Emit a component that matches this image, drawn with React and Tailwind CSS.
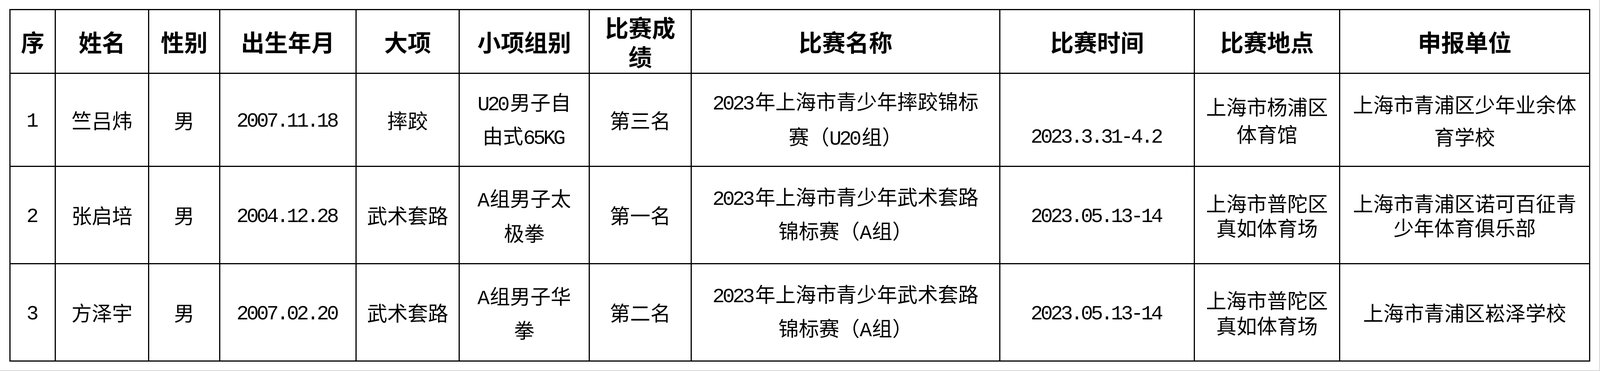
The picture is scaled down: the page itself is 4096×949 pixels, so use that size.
const HEAD = ['序', '姓名', '性别', '出生年月', '大项', '小项组别', ['比赛成', '绩'], '比赛名称', '比赛时间', '比赛地点', '申报单位']

const ROWS = [
  [
    { t: '1' },
    { t: '竺吕炜' },
    { t: '男' },
    { t: '2007.11.18' },
    { t: '摔跤' },
    { t: ['U20男子自', '由式65KG'], lh: 'leading-[77px]' },
    { t: '第三名' },
    { t: ['2023年上海市青少年摔跤锦标', '赛（U20组）'], lh: 'leading-[81px]' },
    { t: '2023.3.31-4.2', pad: 'pt-[81px]' },
    { t: ['上海市杨浦区', '体育馆'], lh: 'leading-[70px]' },
    { t: ['上海市青浦区少年业余体', '育学校'], lh: 'leading-[83px]' },
  ],
  [
    { t: '2' },
    { t: '张启培' },
    { t: '男' },
    { t: '2004.12.28' },
    { t: '武术套路' },
    { t: ['A组男子太', '极拳'], lh: 'leading-[80px]' },
    { t: '第一名' },
    { t: ['2023年上海市青少年武术套路', '锦标赛（A组）'], lh: 'leading-[78px]' },
    { t: '2023.05.13-14' },
    { t: ['上海市普陀区', '真如体育场'], lh: 'leading-[63px]' },
    { t: ['上海市青浦区诺可百征青', '少年体育俱乐部'], lh: 'leading-[62px]' },
  ],
  [
    { t: '3' },
    { t: '方泽宇' },
    { t: '男' },
    { t: '2007.02.20' },
    { t: '武术套路' },
    { t: ['A组男子华', '拳'], lh: 'leading-[78px]' },
    { t: '第二名' },
    { t: ['2023年上海市青少年武术套路', '锦标赛（A组）'], lh: 'leading-[78px]' },
    { t: '2023.05.13-14' },
    { t: ['上海市普陀区', '真如体育场'], lh: 'leading-[65px]' },
    { t: '上海市青浦区崧泽学校' },
  ],
]

// half-width runs (digits, latin) get the narrow mono face
function Line({ s }) {
  const parts = s.split(/([\x20-\x7E]+)/).filter(Boolean)
  return (
    <>
      {parts.map((p, i) =>
        /^[\x20-\x7E]+$/.test(p) ? (
          <span key={i} className="inline-block font-['Liberation_Mono',monospace] tracking-[-5.5px] pr-[6px]">{p}</span>
        ) : (
          <span key={i}>{p}</span>
        )
      )}
    </>
  )
}

function Text({ t }) {
  const lines = Array.isArray(t) ? t : [t]
  return lines.map((l, i) => (
    <div key={i}>
      <Line s={l} />
    </div>
  ))
}

export default function App() {
  return (
    <div className="w-[4096px] h-[949px] bg-white border-r-2 border-b-2 border-[#d6d6d6] box-border pt-[23px] pl-[24px] font-['Noto_Sans_CJK_SC',sans-serif] text-black">
      <div className="grid w-fit bg-black gap-[3px] p-[3px] grid-cols-[113px_236px_179px_346px_261px_330px_258px_787px_495px_369px_637px] grid-rows-[160px_235px_246px_246px]">
        {HEAD.map((h, i) => (
          <div key={i} className="bg-white flex items-center justify-center text-center text-[60px] font-bold leading-[74px]">
            <div>
              {(Array.isArray(h) ? h : [h]).map((l) => (
                <div key={l}>{l}</div>
              ))}
            </div>
          </div>
        ))}
        {ROWS.map((row, r) =>
          row.map((c, i) => (
            <div key={r + '-' + i}
              className={`bg-white flex items-center justify-center text-center text-[52px] font-normal ${c.lh || 'leading-[70px]'} ${c.pad || ''}`}>
              <div>
                <Text t={c.t} />
              </div>
            </div>
          ))
        )}
      </div>
    </div>
  )
}
